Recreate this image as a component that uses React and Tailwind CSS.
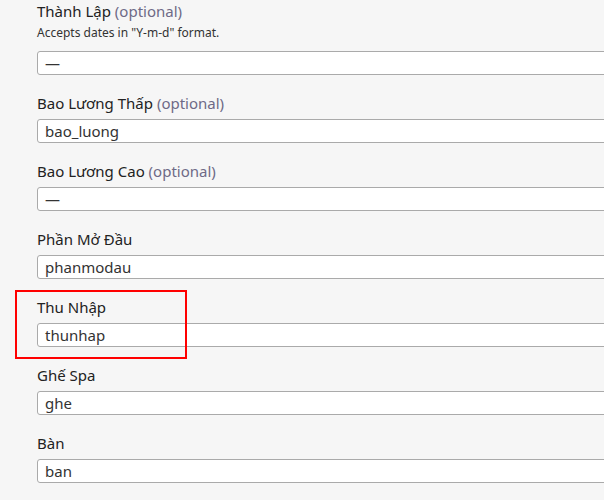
import React from 'react';

const fields = [
  { label: 'Thành Lập', optional: true, help: 'Accepts dates in "Y-m-d" format.', value: '—' },
  { label: 'Bao Lương Thấp', optional: true, value: 'bao_luong' },
  { label: 'Bao Lương Cao', optional: true, value: '—' },
  { label: 'Phần Mở Đầu', value: 'phanmodau' },
  { label: 'Thu Nhập', value: 'thunhap' },
  { label: 'Ghế Spa', value: 'ghe' },
  { label: 'Bàn', value: 'ban' },
];

function Field({ field }) {
  return (
    <div className="mb-[19px]">
      <div className="h-[18px] leading-[18px] text-[15px] text-[#222] whitespace-nowrap">
        {field.label}
        {field.optional && <span className="text-[#6e6a86]"> (optional)</span>}
      </div>
      {field.help ? (
        <p className="mt-[6px] mb-[11px] text-[12px] leading-[14px] text-[#333]">{field.help}</p>
      ) : (
        <div className="h-[7px]" />
      )}
      <div className="w-[600px] h-[24px] bg-white border border-[#aaa] rounded-[3px] pl-[7px] flex items-center text-[15px] text-[#333]">
        {field.value}
      </div>
    </div>
  );
}

export default function App() {
  return (
    <div
      className="relative w-[604px] h-[500px] overflow-hidden bg-[#f6f6f6] pl-[37px] pt-[2px]"
      style={{ fontFamily: '"Noto Sans", Lato, sans-serif' }}
    >
      {fields.map((f) => (
        <Field key={f.label} field={f} />
      ))}
      <div className="absolute left-[15px] top-[290px] w-[172px] h-[69px] border-[2px] border-[#f00]" />
    </div>
  );
}
